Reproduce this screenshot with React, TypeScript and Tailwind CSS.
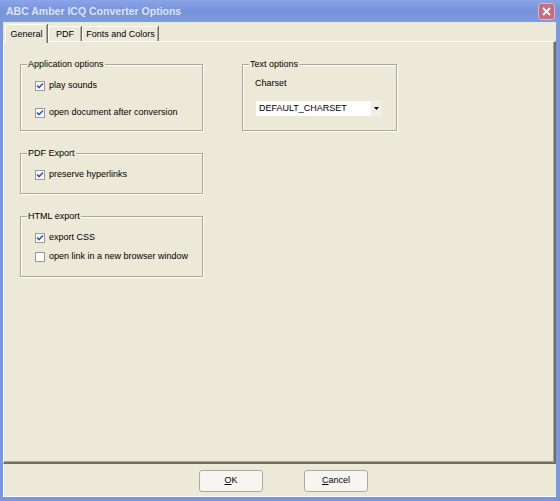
import type { ReactNode } from 'react'

const FONT = { fontFamily: '"Liberation Sans", Arial, sans-serif' }

function Check({ checked, label }: { checked: boolean; label: string }) {
  return (
    <div className="flex items-center h-[13px] gap-[4px]">
      <div className="w-[10px] h-[10px] border border-[#9a9a9a] bg-white flex items-center justify-center">
        {checked && (
          <svg width="8" height="8" viewBox="0 0 8 8">
            <path d="M1 3.5 L3 5.5 L7 1.5" stroke="#2f56c8" strokeWidth="1.6" fill="none" />
          </svg>
        )}
      </div>
      <span className="text-[9px] leading-[11px] text-black">{label}</span>
    </div>
  )
}

function Group({ title, className, children }: { title: string; className: string; children: ReactNode }) {
  return (
    <div className={`relative border border-[#aca899] shadow-[inset_1px_1px_0_#fff,1px_1px_0_#fff] ${className}`}>
      <span className="absolute -top-[6px] left-[6px] px-[1px] bg-[#ece9d8] text-[9px] leading-[11px] text-black">
        {title}
      </span>
      {children}
    </div>
  )
}

function Tab({ label, selected, width }: { label: string; selected?: boolean; width: string }) {
  return (
    <div
      className={`${width} ${selected ? 'h-[19px] mt-0 z-10 -mb-px' : 'h-[15px] mt-[2px]'} relative bg-[#ece9d8] border-l border-t border-white rounded-tl-[2px] shadow-[inset_-1px_0_0_#aca899,1px_0_0_#716f64] flex items-center justify-center text-[9px] leading-[11px] text-black`}
    >
      {label}
    </div>
  )
}

export default function App() {
  return (
    <div className="w-[560px] h-[501px] bg-[#7a96df] flex flex-col" style={FONT}>
      <div className="h-[22px] bg-gradient-to-b from-[#8aa6e8] via-[#7592dc] to-[#7d9ae1] flex items-center justify-between pl-[6px] pr-[5px]">
        <span className="text-[10.5px] font-bold text-[#dbe4f7] leading-none">ABC Amber ICQ Converter Options</span>
        <div className="w-[17px] h-[17px] rounded-[3px] bg-[#c0707f] border border-[#e4b4bd] flex items-center justify-center">
          <svg width="9" height="9" viewBox="0 0 9 9">
            <path d="M1 1 L8 8 M8 1 L1 8" stroke="#fff" strokeWidth="1.8" />
          </svg>
        </div>
      </div>
      <div className="flex-1 ml-[3px] mr-[4px] mb-[4px] bg-[#ece9d8] flex flex-col">
        <div className="h-[19px] flex items-start pl-[2px] pt-[2px] gap-[1px]">
          <Tab label="General" selected width="w-[42px]" />
          <Tab label="PDF" width="w-[33px]" />
          <Tab label="Fonts and Colors" width="w-[76px]" />
        </div>
        <div className="h-[423px] border-t border-l border-white border-r-2 border-b-2 border-r-[#716f64] border-b-[#716f64] shadow-[inset_-1px_-1px_0_#aca899] flex pl-[16px] pt-[22px] gap-[39px]">
          <div className="flex flex-col gap-[22px] w-[183px]">
            <Group title="Application options" className="h-[67px] pt-[14px] pl-[14px]">
              <div className="flex flex-col gap-[14px]">
                <Check checked label="play sounds" />
                <Check checked label="open document after conversion" />
              </div>
            </Group>
            <Group title="PDF Export" className="h-[41px] pt-[14px] pl-[14px]">
              <Check checked label="preserve hyperlinks" />
            </Group>
            <Group title="HTML export" className="h-[61px] pt-[14px] pl-[14px]">
              <div className="flex flex-col gap-[6px]">
                <Check checked label="export CSS" />
                <Check checked={false} label="open link in a new browser window" />
              </div>
            </Group>
          </div>
          <Group title="Text options" className="w-[155px] h-[67px] pt-[12px] pl-[12px] self-start">
            <div className="h-[13px] flex items-center text-[9px] leading-[11px] text-black">Charset</div>
            <div className="mt-[11px] ml-[1px] w-[126px] h-[15px] bg-white flex items-center">
              <span className="flex-1 pl-[3px] text-[9px] leading-[11px] text-black">DEFAULT_CHARSET</span>
              <div className="w-[11px] h-[15px] bg-[#f1efe6] flex items-center justify-center">
                <svg width="5" height="3" viewBox="0 0 5 3">
                  <path d="M0 0 H5 L2.5 3 Z" fill="#000" />
                </svg>
              </div>
            </div>
          </Group>
        </div>
        <div className="flex-1 border-l border-b border-white flex items-start pt-[6px] pl-[195px] gap-[41px]">
          <button className="w-[64px] h-[22px] rounded-[3px] border border-[#aeab9d] bg-[#f6f5f0] text-[9px] text-black">
            <span className="underline">O</span>K
          </button>
          <button className="w-[64px] h-[22px] rounded-[3px] border border-[#aeab9d] bg-[#f6f5f0] text-[9px] text-black">
            <span className="underline">C</span>ancel
          </button>
        </div>
      </div>
    </div>
  )
}
